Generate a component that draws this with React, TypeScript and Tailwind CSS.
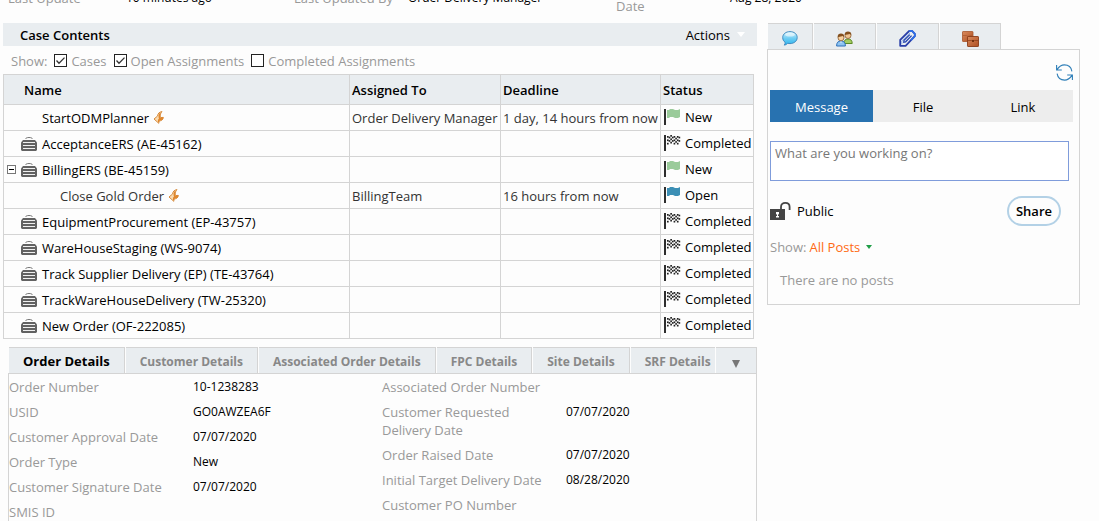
import React from "react";

type Status = "New" | "Open" | "Completed";
type Row = {
  name: string;
  level: "case" | "task" | "subtask";
  expanded?: boolean;
  assignee?: string;
  deadline?: string;
  status?: Status;
};

const rows: Row[] = [
  { name: "StartODMPlanner", level: "task", assignee: "Order Delivery Manager", deadline: "1 day, 14 hours from now", status: "New" },
  { name: "AcceptanceERS (AE-45162)", level: "case", status: "Completed" },
  { name: "BillingERS (BE-45159)", level: "case", expanded: true, status: "New" },
  { name: "Close Gold Order", level: "subtask", assignee: "BillingTeam", deadline: "16 hours from now", status: "Open" },
  { name: "EquipmentProcurement (EP-43757)", level: "case", status: "Completed" },
  { name: "WareHouseStaging (WS-9074)", level: "case", status: "Completed" },
  { name: "Track Supplier Delivery (EP) (TE-43764)", level: "case", status: "Completed" },
  { name: "TrackWareHouseDelivery (TW-25320)", level: "case", status: "Completed" },
  { name: "New Order (OF-222085)", level: "case", status: "Completed" },
];

const detailsLeft: [string, string][] = [
  ["Order Number", "10-1238283"],
  ["USID", "GO0AWZEA6F"],
  ["Customer Approval Date", "07/07/2020"],
  ["Order Type", "New"],
  ["Customer Signature Date", "07/07/2020"],
  ["SMIS ID", ""],
];

const detailsRight: [string, string][] = [
  ["Associated Order Number", ""],
  ["Customer Requested Delivery Date", "07/07/2020"],
  ["Order Raised Date", "07/07/2020"],
  ["Initial Target Delivery Date", "08/28/2020"],
  ["Customer PO Number", ""],
];

const detailTabs = ["Customer Details", "Associated Order Details", "FPC Details", "Site Details"];

function BoltIcon() {
  return (
    <svg width="12" height="13" viewBox="0 0 12 13" className="shrink-0" aria-hidden="true">
      <path d="M9 .6C6.500 1 4.800 2.200 4.600 5L1 8l4.800 4.300L6 9.800c2.200.2 4.200-1 4.200-3.400L7.400 6.600C6.800 4.400 7.400 2.200 9 .6Z" fill="#fbdcb2" stroke="#d58a3c" strokeLinejoin="round" />
      <path d="M7.200 2.500C5.800 4.200 6 6 6.600 8L9.600 7.200C9 8.600 8 9.200 5.600 8.900V11" fill="none" stroke="#e0862c" strokeWidth="1.300" />
    </svg>
  );
}

function CaseIcon() {
  return (
    <svg width="16" height="14" viewBox="0 0 16 14" className="shrink-0" aria-hidden="true">
      <path d="M4.500 2C5 .9 6 .5 8 .5s3 .4 3.500 1.500" fill="none" stroke="#777" />
      <path d="M2 3h12l2 2.500V13l-1 1H1l-1-1V5.500Z" fill="#626262" />
      <path d="M2 5.500h12M2 8.500h12M2 11.500h12" stroke="#f0f0f0" />
    </svg>
  );
}

function FlagIcon({ status }: { status: Status }) {
  const wave = "M3 1h2l1-1h3l2 1h3l2-1v8l-2 1h-3L9 8H6L5 9H3Z";
  const lift = [1, 0, 0, 0, 1, 1, 1, 0];
  const cells: React.ReactNode[] = [];
  if (status === "Completed") {
    lift.forEach((dy, c) => {
      for (let r = 0; r < 5; r++) {
        if ((c + r) % 2 === 0) {
          cells.push(<rect key={`${c}-${r}`} x={3 + c * 1.65} y={r * 1.7 + dy} width="1.65" height="1.7" fill="#222" />);
        }
      }
    });
  }
  return (
    <svg width="17" height="16" viewBox="0 0 17 16" className="shrink-0" aria-hidden="true">
      <rect x="0" y="0" width="2" height="16" fill="#2e2e2e" />
      {status === "Completed" ? cells : <path d={wave} fill={status === "New" ? "#9acb9a" : "#3c8fb5"} />}
    </svg>
  );
}

function Check({ id, label, checked }: { id: string; label: string; checked?: boolean }) {
  return (
    <span className="flex items-center gap-1">
      <span className="grid">
        <input
          id={id}
          type="checkbox"
          defaultChecked={checked}
          className="peer col-start-1 row-start-1 size-[13px] appearance-none border border-[#222] bg-white"
        />
        <svg viewBox="0 0 13 13" className="pointer-events-none invisible col-start-1 row-start-1 size-[13px] peer-checked:visible" aria-hidden="true">
          <path d="M2.500 6.500 5 9.200 10.500 3.600" fill="none" stroke="#333" strokeWidth="1.300" />
        </svg>
      </span>
      <label htmlFor={id}>{label}</label>
    </span>
  );
}

function ChatIcon() {
  return (
    <svg width="16" height="15" viewBox="0 0 16 15" aria-hidden="true">
      <defs>
        <linearGradient id="bubble" x1="0" y1="0" x2="0" y2="1">
          <stop offset="0" stopColor="#d3f0fb" />
          <stop offset=".5" stopColor="#6fcdf3" />
          <stop offset="1" stopColor="#2ab4ee" />
        </linearGradient>
      </defs>
      <path d="M8 .6c4.200 0 7.200 2.500 7.200 5.900S12.200 12.600 8 12.600c-.9 0-1.700-.1-2.400-.3C4.700 13.400 3.500 14 2.200 14.100c.8-.8 1.100-1.700.9-2.800C1.500 10.200.7 8.500.7 6.500.7 3.100 3.800.6 8 .6Z" fill="url(#bubble)" stroke="#3883bb" strokeWidth=".9" />
      <ellipse cx="8" cy="3.600" rx="4.800" ry="2" fill="#fff" opacity=".55" />
    </svg>
  );
}

function PeopleIcon() {
  return (
    <svg width="17" height="16" viewBox="0 0 17 16" aria-hidden="true">
      <path d="M8 12.500c0-3 1.200-4.500 4-4.500s4.200 1.500 4.200 4.500Z" fill="#a3cc62" stroke="#5c8a25" />
      <circle cx="12" cy="4.500" r="3" fill="#f0c593" stroke="#7b4a1b" strokeWidth=".7" />
      <path d="M8.600 4C8.600 1.500 10 .5 12 .5s3.500 1 3.400 3.500L14 3Z" fill="#84501f" />
      <path d="M.6 15c0-3.500 1.500-5 4.400-5s4.400 1.500 4.400 5Z" fill="#8ec4f2" stroke="#2d6fb8" />
      <path d="M4 10.500 5 12l1-1.500Z" fill="#fff" />
      <circle cx="5" cy="6.800" r="3" fill="#f7d0a0" stroke="#7b4a1b" strokeWidth=".7" />
      <path d="M1.600 6.200C1.600 3.600 3 2.600 5 2.600s3.400 1 3.400 3.600L7 5Z" fill="#84501f" />
    </svg>
  );
}

function ClipIcon() {
  return (
    <svg width="17" height="17" viewBox="0 0 17 17" aria-hidden="true">
      <path d="M1.200 15.800V9.800L10.200 1h3l2.600 2.800v2.400L6.600 15.800Z" fill="none" stroke="#2a3fa8" strokeWidth="1.800" strokeLinejoin="round" />
      <path d="M10.200 1h3l2.600 2.800v2.400L12 10.200" fill="none" stroke="#2f6fe6" strokeWidth="1.800" strokeLinejoin="round" />
      <path d="M2.800 14.200V11L11 3" fill="none" stroke="#8db0e8" strokeWidth=".9" />
      <path d="M12.600 5.600 6.600 11.800 4.800 12.200 5 10.400 10.800 4.600" fill="none" stroke="#2545b0" strokeWidth="1.300" />
    </svg>
  );
}

function FoldersIcon() {
  return (
    <svg width="17" height="16" viewBox="0 0 17 16" aria-hidden="true">
      <defs>
        <linearGradient id="leather" x1="0" y1="0" x2="1" y2="1">
          <stop offset="0" stopColor="#d98a5c" />
          <stop offset="1" stopColor="#ae4f22" />
        </linearGradient>
      </defs>
      <rect x=".5" y=".5" width="10.500" height="10" rx=".6" fill="url(#leather)" stroke="#a8562b" strokeWidth=".8" />
      <path d="M1 4.500h3.500L6 5.500 10.500 4" fill="none" stroke="#a8562b" strokeWidth=".7" />
      <rect x="5.500" y="5.500" width="11" height="10" rx=".6" fill="url(#leather)" stroke="#8a3c18" strokeWidth=".9" />
      <path d="M6 9.500h3.500l1.500 1 1.500-1H16" fill="none" stroke="#8a3c18" strokeWidth=".7" />
      <rect x="10" y="9" width="2" height="2" fill="#73310f" />
    </svg>
  );
}

function RefreshIcon() {
  return (
    <svg width="17" height="17" viewBox="0 0 17 17" fill="none" stroke="#2f7fb8" strokeWidth="1.100" aria-hidden="true">
      <path d="M.6 1v5h5.200M1 5.600C3.200 2.400 5.600.9 8.400.9c3.800 0 6.800 2.300 7.500 6.400" />
      <path d="M16.400 16v-5h-5.200M16 11.400c-2.200 3.200-4.600 4.700-7.400 4.700-3.800 0-6.800-2.300-7.500-6.400" />
    </svg>
  );
}

function LockIcon() {
  return (
    <svg width="21" height="18" viewBox="0 0 21 18" aria-hidden="true">
      <path d="M11 8V5c0-2.700 1.800-4.100 4.300-4.100S19.600 2.300 19.600 5v3" fill="none" stroke="#444" strokeWidth="1.800" />
      <rect x="0" y="7" width="15" height="11" fill="#444" />
      <path d="M6 10h3v2l-1 .7V14h1v1.500H6V14h1v-1.300l-1-.7Z" fill="#fdfdfd" />
    </svg>
  );
}

function DetailList({ items, cols }: { items: [string, string][]; cols: string }) {
  return (
    <dl className="flex flex-col gap-[7px]">
      {items.map(([label, value]) => (
        <div key={label} className={cols}>
          <dt className="text-[#999]">{label}</dt>
          <dd className="text-xs leading-[18px] text-black">{value}</dd>
        </div>
      ))}
    </dl>
  );
}

const cell = "border border-[#d4d4d4] px-[2px] py-0";

export default function App() {
  return (
    <div className="h-screen overflow-hidden bg-[#fdfdfd] font-['Open_Sans',sans-serif] text-[13px] leading-[18px] text-black">
      <header className="h-[23px] overflow-hidden pl-2">
        <div className="-mt-[11px] grid grid-cols-[118fr_168fr_114fr_208fr_114fr_369fr]">
          <span className="text-[#999]">Last Update</span>
          <span className="text-xs leading-[18px]">10 minutes ago</span>
          <span className="text-[#999]">Last Updated By</span>
          <span className="text-xs leading-[18px]">Order Delivery Manager</span>
          <span className="pt-2 text-[#999]">Date</span>
          <span className="text-xs leading-[18px]">Aug 28, 2020</span>
        </div>
      </header>

      <div className="grid grid-cols-[754fr_313fr] items-start gap-[10px] pr-[19px] pl-[3px]">
        <main className="min-w-0">
          <div className="flex h-[23px] items-center justify-between bg-[#e9edf0] pr-3 pl-[17px]">
            <h2 className="font-semibold">Case Contents</h2>
            <button type="button" className="flex items-center gap-[7px]">
              Actions
              <svg width="8" height="5" viewBox="0 0 8 5" aria-hidden="true">
                <path d="M0 0h8L4 5Z" fill="#fff" />
              </svg>
            </button>
          </div>

          <div className="flex h-7 items-center gap-[7px] pt-px pl-2 text-[#999]">
            <span>Show:</span>
            <Check id="show-cases" label="Cases" checked />
            <Check id="show-open" label="Open Assignments" checked />
            <Check id="show-completed" label="Completed Assignments" />
          </div>

          <div className="pr-[3px]">
            <table className="w-full table-fixed border-collapse whitespace-nowrap">
              <colgroup>
                <col className="w-[346px]" />
                <col className="w-[151px]" />
                <col className="w-[160px]" />
                <col />
              </colgroup>
              <thead>
                <tr className="h-[30px] bg-[#e9edf0] text-left">
                  <th className="border border-[#d4d4d4] py-0 pl-5 font-semibold">Name</th>
                  <th className={`${cell} font-semibold`}>Assigned To</th>
                  <th className={`${cell} font-semibold`}>Deadline</th>
                  <th className={`${cell} font-semibold`}>Status</th>
                </tr>
              </thead>
              <tbody>
                {rows.map((row) => (
                  <tr key={row.name} className="h-[26px]">
                    <td className="border border-[#d4d4d4] p-0">
                      <div className="flex items-center gap-1">
                        {row.level === "case" && (
                          <>
                            <span className="flex w-[13px] justify-end pr-px">
                              {row.expanded && (
                                <button type="button" aria-label="Collapse" className="flex size-[9px] items-center justify-center border border-[#777] bg-white">
                                  <span className="h-px w-[5px] bg-black" />
                                </button>
                              )}
                            </span>
                            <CaseIcon />
                            <span className="pl-px">{row.name}</span>
                          </>
                        )}
                        {row.level === "task" && (
                          <>
                            <span className="pl-[38px]">{row.name}</span>
                            <BoltIcon />
                          </>
                        )}
                        {row.level === "subtask" && (
                          <>
                            <span className="pl-14 text-[#333]">{row.name}</span>
                            <BoltIcon />
                          </>
                        )}
                      </div>
                    </td>
                    <td className={`${cell} text-[#333]`}>{row.assignee}</td>
                    <td className={`${cell} text-[#333]`}>{row.deadline}</td>
                    <td className="border border-[#d4d4d4] px-[2px] pt-0 pb-[2px]">
                      {row.status && (
                        <div className="flex items-center gap-1 pl-px">
                          <FlagIcon status={row.status} />
                          {row.status}
                        </div>
                      )}
                    </td>
                  </tr>
                ))}
              </tbody>
            </table>
          </div>

          <section className="mt-2 ml-[5px]">
            <div role="tablist" className="flex h-[26px] gap-px pl-px text-xs font-bold text-[#888]">
              <button type="button" role="tab" aria-selected="true" className="border-t border-r border-[#d4d4d4] bg-[#e9edf0] px-[14px] pt-[2px] text-[13px] whitespace-nowrap text-black">
                Order Details
              </button>
              {detailTabs.map((tab) => (
                <button key={tab} type="button" role="tab" aria-selected="false" className="border-t border-r border-[#d4d4d4] bg-[#e9edf0] px-[14px] pt-[2px] whitespace-nowrap">
                  {tab}
                </button>
              ))}
              <button type="button" role="tab" aria-selected="false" className="border-t border-[#d4d4d4] bg-[#e9edf0] pt-[2px] pr-1 pl-[14px] whitespace-nowrap">
                SRF Details
              </button>
              <button type="button" aria-label="More tabs" className="flex flex-1 items-center justify-center border-t border-r border-[#d4d4d4] bg-[#e9edf0] pt-[6px]">
                <svg width="8" height="8" viewBox="0 0 8 8" aria-hidden="true">
                  <path d="M0 0h8L4 8Z" fill="#777" />
                </svg>
              </button>
            </div>
            <div className="grid grid-cols-[373fr_374fr] border border-[#d4d4d4] pt-1 pb-4">
              <DetailList items={detailsLeft} cols="grid grid-cols-[184fr_189fr]" />
              <DetailList items={detailsRight} cols="grid grid-cols-[184fr_190fr] [&>dt]:pr-5" />
            </div>
          </section>
        </main>

        <aside className="min-w-0">
          <div role="tablist" className="flex h-[26px] gap-px pl-px [&>button]:flex [&>button]:items-center [&>button]:justify-center [&>button]:border-t [&>button]:border-r [&>button]:border-[#d4d4d4] [&>button]:bg-[#e9edf0] [&>button]:pt-1">
            <button type="button" role="tab" aria-label="Messages" className="w-[45px]"><ChatIcon /></button>
            <button type="button" role="tab" aria-label="People" className="w-[62px]"><PeopleIcon /></button>
            <button type="button" role="tab" aria-label="Attachments" className="w-[62px]"><ClipIcon /></button>
            <button type="button" role="tab" aria-label="Related cases" className="w-[61px]"><FoldersIcon /></button>
          </div>

          <div className="flex flex-col border border-[#d4d4d4] pt-[14px] pr-[6px] pb-[15px] pl-[2px]">
            <button type="button" aria-label="Refresh" className="self-end"><RefreshIcon /></button>
            <div className="mt-[9px] grid h-8 grid-cols-[34fr_33fr_33fr] bg-[#ededed] [&>button]:pt-px">
              <button type="button" className="bg-[#2872b0] text-white">Message</button>
              <button type="button">File</button>
              <button type="button">Link</button>
            </div>
            <textarea
              aria-label="Message"
              placeholder="What are you working on?"
              className="mt-[19px] mr-1 h-10 resize-none border border-[#7f9cdb] bg-white px-1 py-[2px] placeholder:text-[#777]"
            />
            <div className="mt-[15px] mr-3 flex h-[30px] items-center gap-[6px]">
              <LockIcon />
              <span>Public</span>
              <button type="button" className="ml-auto h-[30px] rounded-full border-2 border-[#b3d1e6] px-[7px] font-semibold">Share</button>
            </div>
            <div className="mt-3 flex items-center gap-[3px] text-[#999]">
              Show:
              <button type="button" className="flex items-center gap-[6px] text-[#ff6a13]">
                All Posts
                <svg width="6" height="4" viewBox="0 0 6 4" aria-hidden="true">
                  <path d="M0 0h6L3 4Z" fill="#1f9e47" />
                </svg>
              </button>
            </div>
            <p className="mt-[15px] pl-[10px] text-[#999]">There are no posts</p>
          </div>
        </aside>
      </div>
    </div>
  );
}
